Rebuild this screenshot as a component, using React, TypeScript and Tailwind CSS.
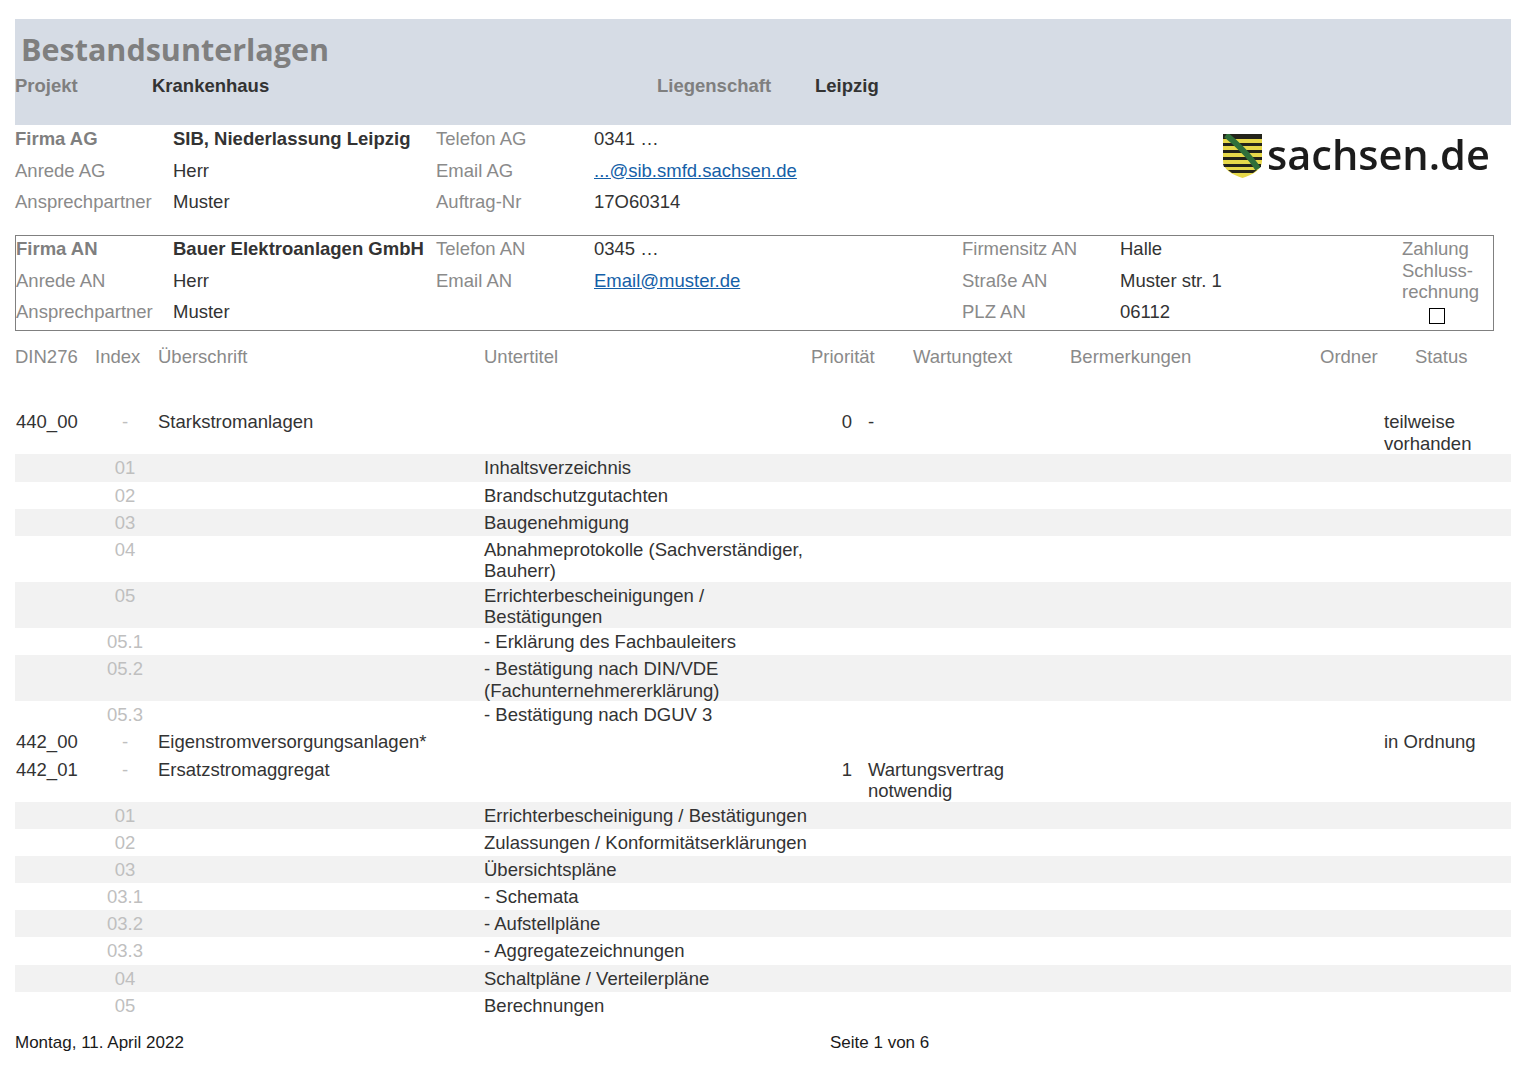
const rowGrid = "grid grid-cols-[80px_60px_329px_327px_41px_16px_162px_354px_127px]";

type Row = {
  din?: string;
  index: string;
  title?: string;
  sub?: string;
  prio?: string;
  note?: string;
  status?: string;
  shaded?: boolean;
};

const rows: Row[] = [
  { din: "440_00", index: "-", title: "Starkstromanlagen", prio: "0", note: "-", status: "teilweise vorhanden" },
  { index: "01", sub: "Inhaltsverzeichnis", shaded: true },
  { index: "02", sub: "Brandschutzgutachten" },
  { index: "03", sub: "Baugenehmigung", shaded: true },
  { index: "04", sub: "Abnahmeprotokolle (Sachverständiger, Bauherr)" },
  { index: "05", sub: "Errichterbescheinigungen / Bestätigungen", shaded: true },
  { index: "05.1", sub: "- Erklärung des Fachbauleiters" },
  { index: "05.2", sub: "- Bestätigung nach DIN/VDE (Fachunternehmererklärung)", shaded: true },
  { index: "05.3", sub: "- Bestätigung nach DGUV 3" },
  { din: "442_00", index: "-", title: "Eigenstromversorgungsanlagen*", status: "in Ordnung" },
  { din: "442_01", index: "-", title: "Ersatzstromaggregat", prio: "1", note: "Wartungsvertrag notwendig" },
  { index: "01", sub: "Errichterbescheinigung / Bestätigungen", shaded: true },
  { index: "02", sub: "Zulassungen / Konformitätserklärungen" },
  { index: "03", sub: "Übersichtspläne", shaded: true },
  { index: "03.1", sub: "- Schemata" },
  { index: "03.2", sub: "- Aufstellpläne", shaded: true },
  { index: "03.3", sub: "- Aggregatezeichnungen" },
  { index: "04", sub: "Schaltpläne / Verteilerpläne", shaded: true },
  { index: "05", sub: "Berechnungen" },
];

// Saxon coat of arms, small and a bit soft like the logo in the scan
function Crest() {
  return (
    <svg width="39" height="44" viewBox="0 0 39 44" className="shrink-0">
      <path d="M0 0H39V27C39 36 29 41 19.5 44C10 41 0 36 0 27Z" fill="#e6d84a" />
      <path d="M0 0H39V5H0ZM0 9H39V12H0ZM0 16H39V19H0ZM0 23H39V26H0ZM0 30H38V33H1ZM5 36H34L30 39H9Z" fill="#23231a" />
      <path d="M3 1C12 8 27 22 35 35" fill="none" stroke="#2f6f3a" strokeWidth="6" />
    </svg>
  );
}

function Label({ strong, children }: { strong?: boolean; children: React.ReactNode }) {
  return <div className={strong ? "font-bold text-[#7f7f7f]" : "text-[#8a8a8a]"}>{children}</div>;
}

function Value({ strong, children }: { strong?: boolean; children?: React.ReactNode }) {
  return <div className={strong ? "font-bold text-[#333333]" : "text-[#333333]"}>{children}</div>;
}

function Mail({ children }: { children: React.ReactNode }) {
  return <a className="text-[#155fa8] underline">{children}</a>;
}

export default function App() {
  return (
    <div className="h-[1082px] bg-white pt-[19px] font-['Liberation_Sans',Arial,sans-serif] text-[18.5px] leading-[22px]">
      <div className="mx-[15px] h-[106px] w-[1496px] bg-[#d6dce5] pt-[10px]">
        <div className="pl-[6px] font-['Open_Sans',sans-serif] text-[30.5px] leading-[40px] font-bold text-[#7f7f7f]">
          Bestandsunterlagen
        </div>
        <div className="mt-[6px] grid grid-cols-[137px_505px_158px_1fr] font-bold">
          <div className="text-[#7f7f7f]">Projekt</div>
          <div className="text-[#333333]">Krankenhaus</div>
          <div className="text-[#7f7f7f]">Liegenschaft</div>
          <div className="text-[#333333]">Leipzig</div>
        </div>
      </div>

      <div className="mx-[15px] flex h-[110px] w-[1496px] pt-[3px]">
        <div className="grid h-fit w-[1208px] grid-cols-[158px_263px_158px_1fr] auto-rows-[31.5px]">
          <Label strong>Firma AG</Label>
          <Value strong>SIB, Niederlassung Leipzig</Value>
          <Label>Telefon AG</Label>
          <Value>0341 …</Value>
          <Label>Anrede AG</Label>
          <Value>Herr</Value>
          <Label>Email AG</Label>
          <Value><Mail>...@sib.smfd.sachsen.de</Mail></Value>
          <Label>Ansprechpartner</Label>
          <Value>Muster</Value>
          <Label>Auftrag-Nr</Label>
          <Value>17O60314</Value>
        </div>
        <div className="mt-[6px] flex h-fit items-start gap-[5px] blur-[0.4px]">
          <Crest />
          <span className="mt-[-5px] font-['Open_Sans',sans-serif] text-[41.5px] leading-[50px] font-semibold text-[#1c1c1c]">sachsen.de</span>
        </div>
      </div>

      <div className="mx-[15px] flex h-[96px] w-[1479px] border border-[#808080]">
        <div className="grid h-fit w-[1386px] grid-cols-[157px_263px_158px_368px_158px_282px] auto-rows-[31.5px] pt-[2px]">
          <Label strong>Firma AN</Label>
          <Value strong>Bauer Elektroanlagen GmbH</Value>
          <Label>Telefon AN</Label>
          <Value>0345 …</Value>
          <Label>Firmensitz AN</Label>
          <Value>Halle</Value>
          <Label>Anrede AN</Label>
          <Value>Herr</Value>
          <Label>Email AN</Label>
          <Value><Mail>Email@muster.de</Mail></Value>
          <Label>Straße AN</Label>
          <Value>Muster str. 1</Value>
          <Label>Ansprechpartner</Label>
          <Value>Muster</Value>
          <div />
          <div />
          <Label>PLZ AN</Label>
          <Value>06112</Value>
        </div>
        <div className="flex flex-col pt-[2px] text-[#8a8a8a] leading-[21.5px]">
          <div>Zahlung</div>
          <div>Schluss-</div>
          <div>rechnung</div>
          <div className="mt-[5px] ml-[27px] size-[16px] border border-black" />
        </div>
      </div>

      <div className="mx-[15px] flex h-[77.4px] w-[1496px] pt-[15px] text-[#8a8a8a]">
        <div className="w-[80px]">DIN276</div>
        <div className="w-[63px]">Index</div>
        <div className="w-[326px]">Überschrift</div>
        <div className="w-[327px]">Untertitel</div>
        <div className="w-[102px]">Priorität</div>
        <div className="w-[157px]">Wartungtext</div>
        <div className="w-[250px]">Bermerkungen</div>
        <div className="w-[95px]">Ordner</div>
        <div>Status</div>
      </div>

      <div className="mx-[15px] w-[1496px]">
        {rows.map((r, i) => (
          <div
            key={i}
            className={`${rowGrid} min-h-[27.2px] pt-[3px] leading-[21.5px] ${r.shaded ? "bg-[#f2f2f2]" : ""}`}
          >
            <div className="pl-px text-[#333333]">{r.din}</div>
            <div className="text-center text-[#bfbfbf]">{r.index}</div>
            <div className="pl-[3px] text-[#333333]">{r.title}</div>
            <div className="text-[#333333]">{r.sub}</div>
            <div className="text-right text-[#333333]">{r.prio}</div>
            <div />
            <div className="text-[#333333]">{r.note}</div>
            <div />
            <div className="text-[#333333]">{r.status}</div>
          </div>
        ))}
      </div>

      <div className="mx-[15px] mt-[14px] flex text-[17px] leading-[20px] text-[#1a1a1a]">
        <div className="w-[815px]">Montag, 11. April 2022</div>
        <div>Seite 1 von 6</div>
      </div>
    </div>
  );
}
